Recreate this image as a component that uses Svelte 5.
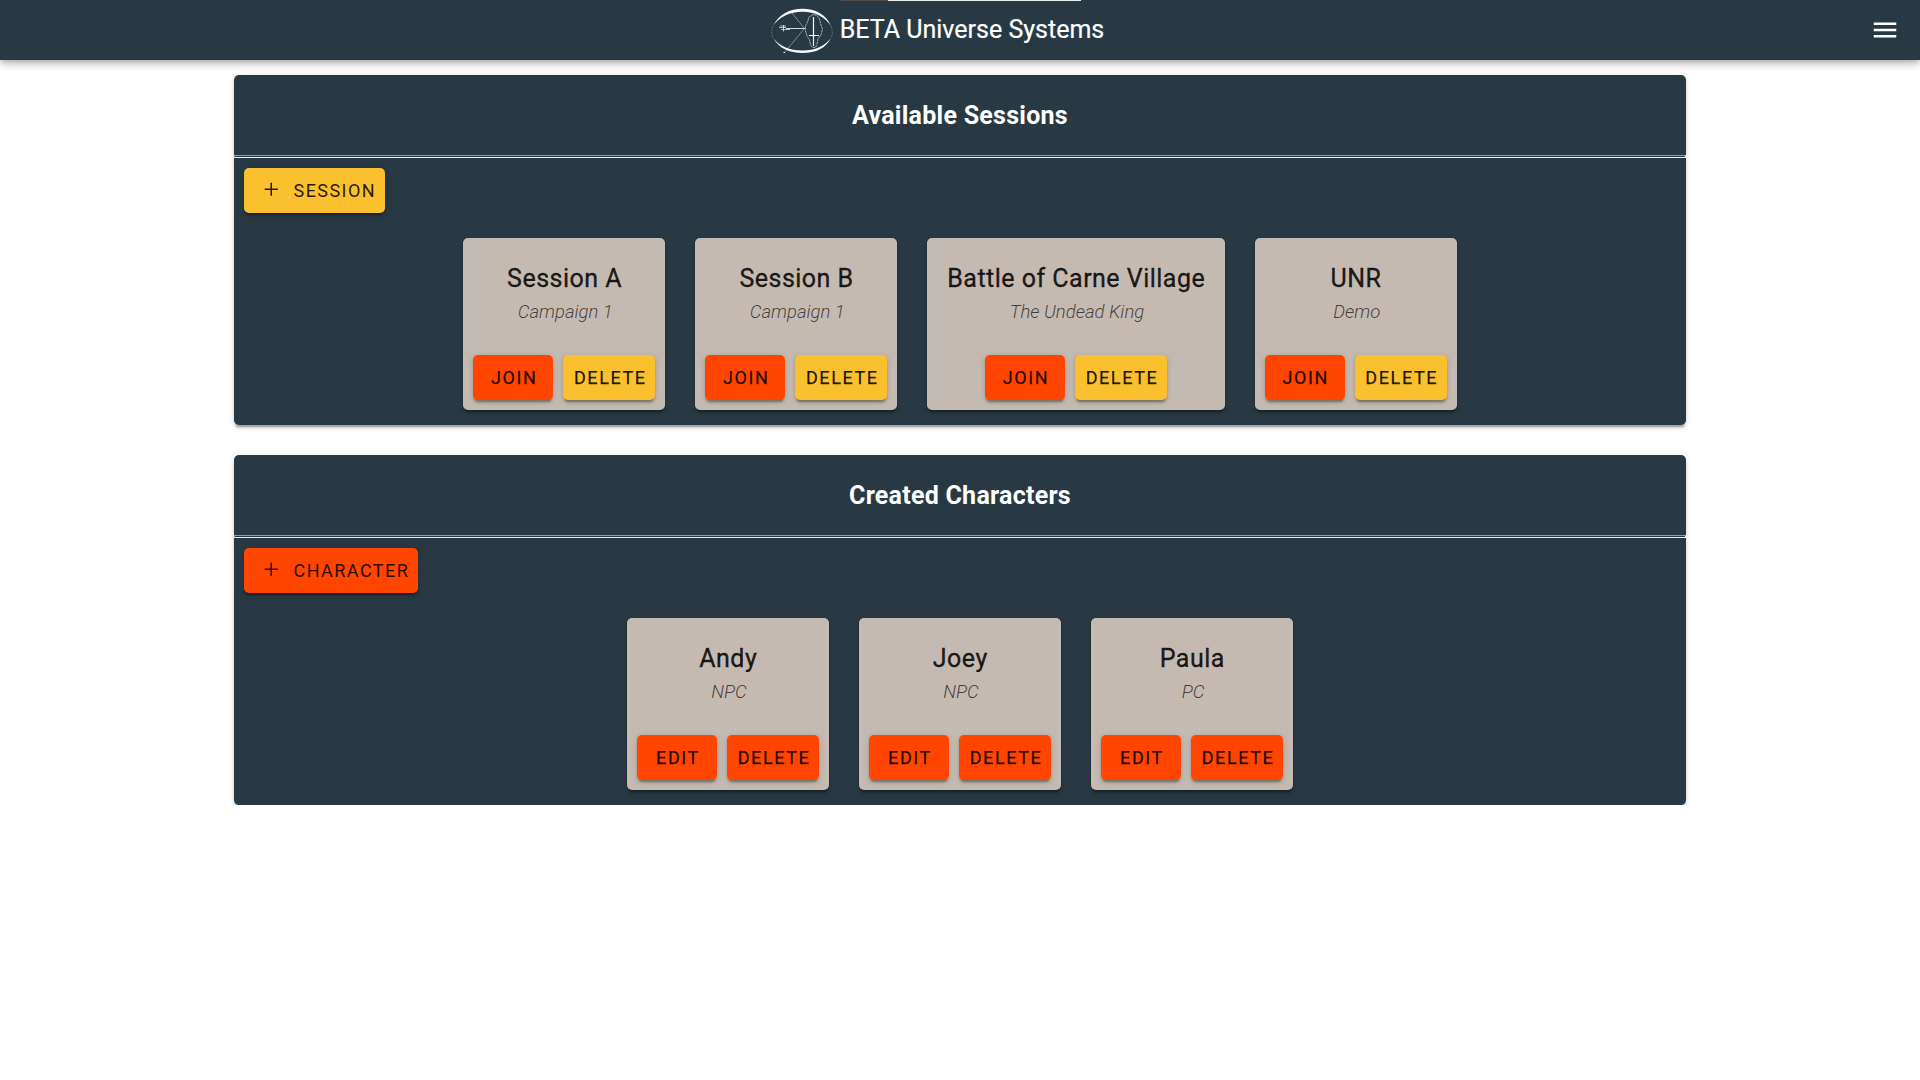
<script>
  const panels = [
    {
      title: 'Available Sessions',
      add: 'Session',
      addTone: 'amber',
      action: 'Join',
      removeTone: 'amber',
      items: [
        { name: 'Session A', detail: 'Campaign 1' },
        { name: 'Session B', detail: 'Campaign 1' },
        { name: 'Battle of Carne Village', detail: 'The Undead King' },
        { name: 'UNR', detail: 'Demo' }
      ]
    },
    {
      title: 'Created Characters',
      add: 'Character',
      addTone: 'orange',
      action: 'Edit',
      removeTone: 'orange',
      items: [
        { name: 'Andy', detail: 'NPC' },
        { name: 'Joey', detail: 'NPC' },
        { name: 'Paula', detail: 'PC' }
      ]
    }
  ];
</script>

<header class="bar">
  <div class="progress"></div>
  <div class="brand">
    <svg class="logo" viewBox="0 0 62 48" fill="none" stroke="#fff">
      <path d="M2 18C8 6 19 .7 31.500 .7S55 6 60 18C54 9 44 3.800 31.500 3.800S8 9 2 18Z" fill="#f4f8fa" stroke="none" />
      <path d="M2 30C8 40 18 45 31.500 45S55 40 60 30C54 38 44 42.500 31.500 42.500S8 38 2 30Z" fill="#f4f8fa" stroke="none" />
      <path d="M2 18Q-.6 24 2 30M60 18Q62.600 24 60 30" stroke-opacity=".3" stroke-width=".8" stroke-dasharray="2 1" />
      <path d="M21 5L33.500 20.500L13.500 44.500" stroke-opacity=".5" stroke-width=".8" />
      <path d="M15 20.500H34" stroke-opacity=".8" />
      <path d="M8 19.500H15M10 21.500H19M12.500 17V23.500M9 18H15" stroke-opacity=".65" />
      <path d="M12.500 44.500H14" />
      <path d="M42.500 6.500L38 9L36.500 14L34.500 18V23L36 28L38.500 32L39.500 37L41.500 39.500H44.500L46 36L47 31L50 27L51.500 21L50 17L48.500 11L46 7.500Z" stroke-opacity=".65" stroke-width=".9" stroke-dasharray="2.500 .7" />
      <path d="M42.500 9V38" stroke-width="1.200" />
      <path d="M38 27.500H48" />
    </svg>
    <span>BETA Universe Systems</span>
  </div>
  <svg class="menu" viewBox="0 0 24 24" fill="#fff"><path d="M3 6H21V8H3ZM3 11H21V13H3ZM3 16H21V18H3Z" /></svg>
</header>

<main>
  {#each panels as panel}
    <section class="panel">
      <h2>{panel.title}</h2>
      <hr />
      <div class="tools">
        <button class="btn add {panel.addTone}">
          <svg class="plus" viewBox="0 0 24 24"><path d="M5 12H19M12 5V19" /></svg>
          {panel.add}
        </button>
      </div>
      <div class="cards">
        {#each panel.items as item}
          <article class="card">
            <h3>{item.name}</h3>
            <p>{item.detail}</p>
            <div class="actions">
              <button class="btn orange">{panel.action}</button>
              <button class="btn remove {panel.removeTone}">Delete</button>
            </div>
          </article>
        {/each}
      </div>
    </section>
  {/each}
</main>

<style>
  :global(body) {
    background: #fff;
    font-family: Roboto, sans-serif;
  }
  .bar {
    position: relative;
    z-index: 1;
    height: 60px;
    background: #283943;
    color: #fff;
    display: grid;
    grid-template-columns: 1fr auto 1fr;
    align-items: center;
    box-shadow: 0 2.5px 5px -1.25px rgba(0, 0, 0, 0.2), 0 5px 6.25px rgba(0, 0, 0, 0.14), 0 1.25px 12.5px rgba(0, 0, 0, 0.12);
  }
  .progress {
    position: absolute;
    top: 0;
    left: 840px;
    width: 241px;
    height: 1px;
    background: linear-gradient(90deg, #55494b 48px, #eceff0 48px);
  }
  .brand {
    grid-column: 2;
    display: flex;
    align-items: center;
    padding-right: 45px;
    font-size: 25px;
    line-height: 40px;
    white-space: nowrap;
    -webkit-text-stroke: 0.2px #fff;
  }
  .logo {
    width: 62px;
    height: 48px;
    margin: 3px 7px 0 0;
  }
  .menu {
    width: 30px;
    height: 30px;
    justify-self: end;
    margin-right: 20px;
  }
  main {
    width: 1452px;
    margin: 15px auto 0;
    display: flex;
    flex-direction: column;
    gap: 30px;
  }
  .panel {
    height: 350px;
    background: #283943;
    border-radius: 5px;
    box-shadow: 0 3.75px 1.25px -2.5px rgba(0, 0, 0, 0.2), 0 2.5px 2.5px rgba(0, 0, 0, 0.14), 0 1.25px 6.25px rgba(0, 0, 0, 0.12);
  }
  h2 {
    margin: 0;
    padding: 21px 20px 19px;
    color: #fff;
    font-size: 25px;
    line-height: 40px;
    font-weight: 700;
    letter-spacing: 0.26px;
    text-align: center;
  }
  hr {
    box-sizing: border-box;
    height: 3px;
    margin: 0;
    border: 1px solid;
    border-color: #9a9a9a #eee #eee #9a9a9a;
  }
  .tools {
    display: flex;
    padding: 10px;
  }
  .btn {
    box-sizing: border-box;
    display: flex;
    align-items: center;
    justify-content: center;
    min-width: 80px;
    height: 45px;
    padding: 0 10px;
    border: 0;
    border-radius: 5px;
    font: 400 18px Roboto, sans-serif;
    letter-spacing: 1.45px;
    text-transform: uppercase;
    color: rgba(0, 0, 0, 0.87);
    box-shadow: 0 3.75px 1.25px -2.5px rgba(0, 0, 0, 0.2), 0 2.5px 2.5px rgba(0, 0, 0, 0.14), 0 1.25px 6.25px rgba(0, 0, 0, 0.12);
  }
  .actions .btn {
    padding: 0 9px 0 11px;
    letter-spacing: 1.6px;
    -webkit-text-stroke: 0.25px rgba(0, 0, 0, 0.87);
  }
  .actions .remove {
    width: 92px;
  }
  .amber {
    background: #fbc02d;
  }
  .orange {
    background: #ff4500;
  }
  .add {
    padding-left: 16px;
    padding-right: 9px;
  }
  .plus {
    width: 22.5px;
    height: 22.5px;
    margin: -2px 11px 0 0;
    fill: none;
    stroke: rgba(0, 0, 0, 0.87);
    stroke-width: 1.6;
  }
  .cards {
    display: flex;
    justify-content: center;
    gap: 30px;
    padding-top: 15px;
  }
  .card {
    background: #c5bab1;
    border-radius: 5px;
    text-align: center;
    box-shadow: 0 3.75px 1.25px -2.5px rgba(0, 0, 0, 0.2), 0 2.5px 2.5px rgba(0, 0, 0, 0.14), 0 1.25px 6.25px rgba(0, 0, 0, 0.12);
  }
  h3 {
    margin: 0;
    padding: 21px 19.5px 0 20px;
    font-size: 25px;
    line-height: 40px;
    font-weight: 400;
    letter-spacing: 0.48px;
    color: rgba(0, 0, 0, 0.87);
    -webkit-text-stroke: 0.35px rgba(0, 0, 0, 0.87);
  }
  p {
    margin: 0;
    padding: 0 19px 19px 21px;
    font-size: 18.5px;
    line-height: 27px;
    font-weight: 300;
    font-style: italic;
    color: rgba(0, 0, 0, 0.68);
  }
  .actions {
    display: flex;
    justify-content: center;
    gap: 10px;
    padding: 10px;
  }
</style>
